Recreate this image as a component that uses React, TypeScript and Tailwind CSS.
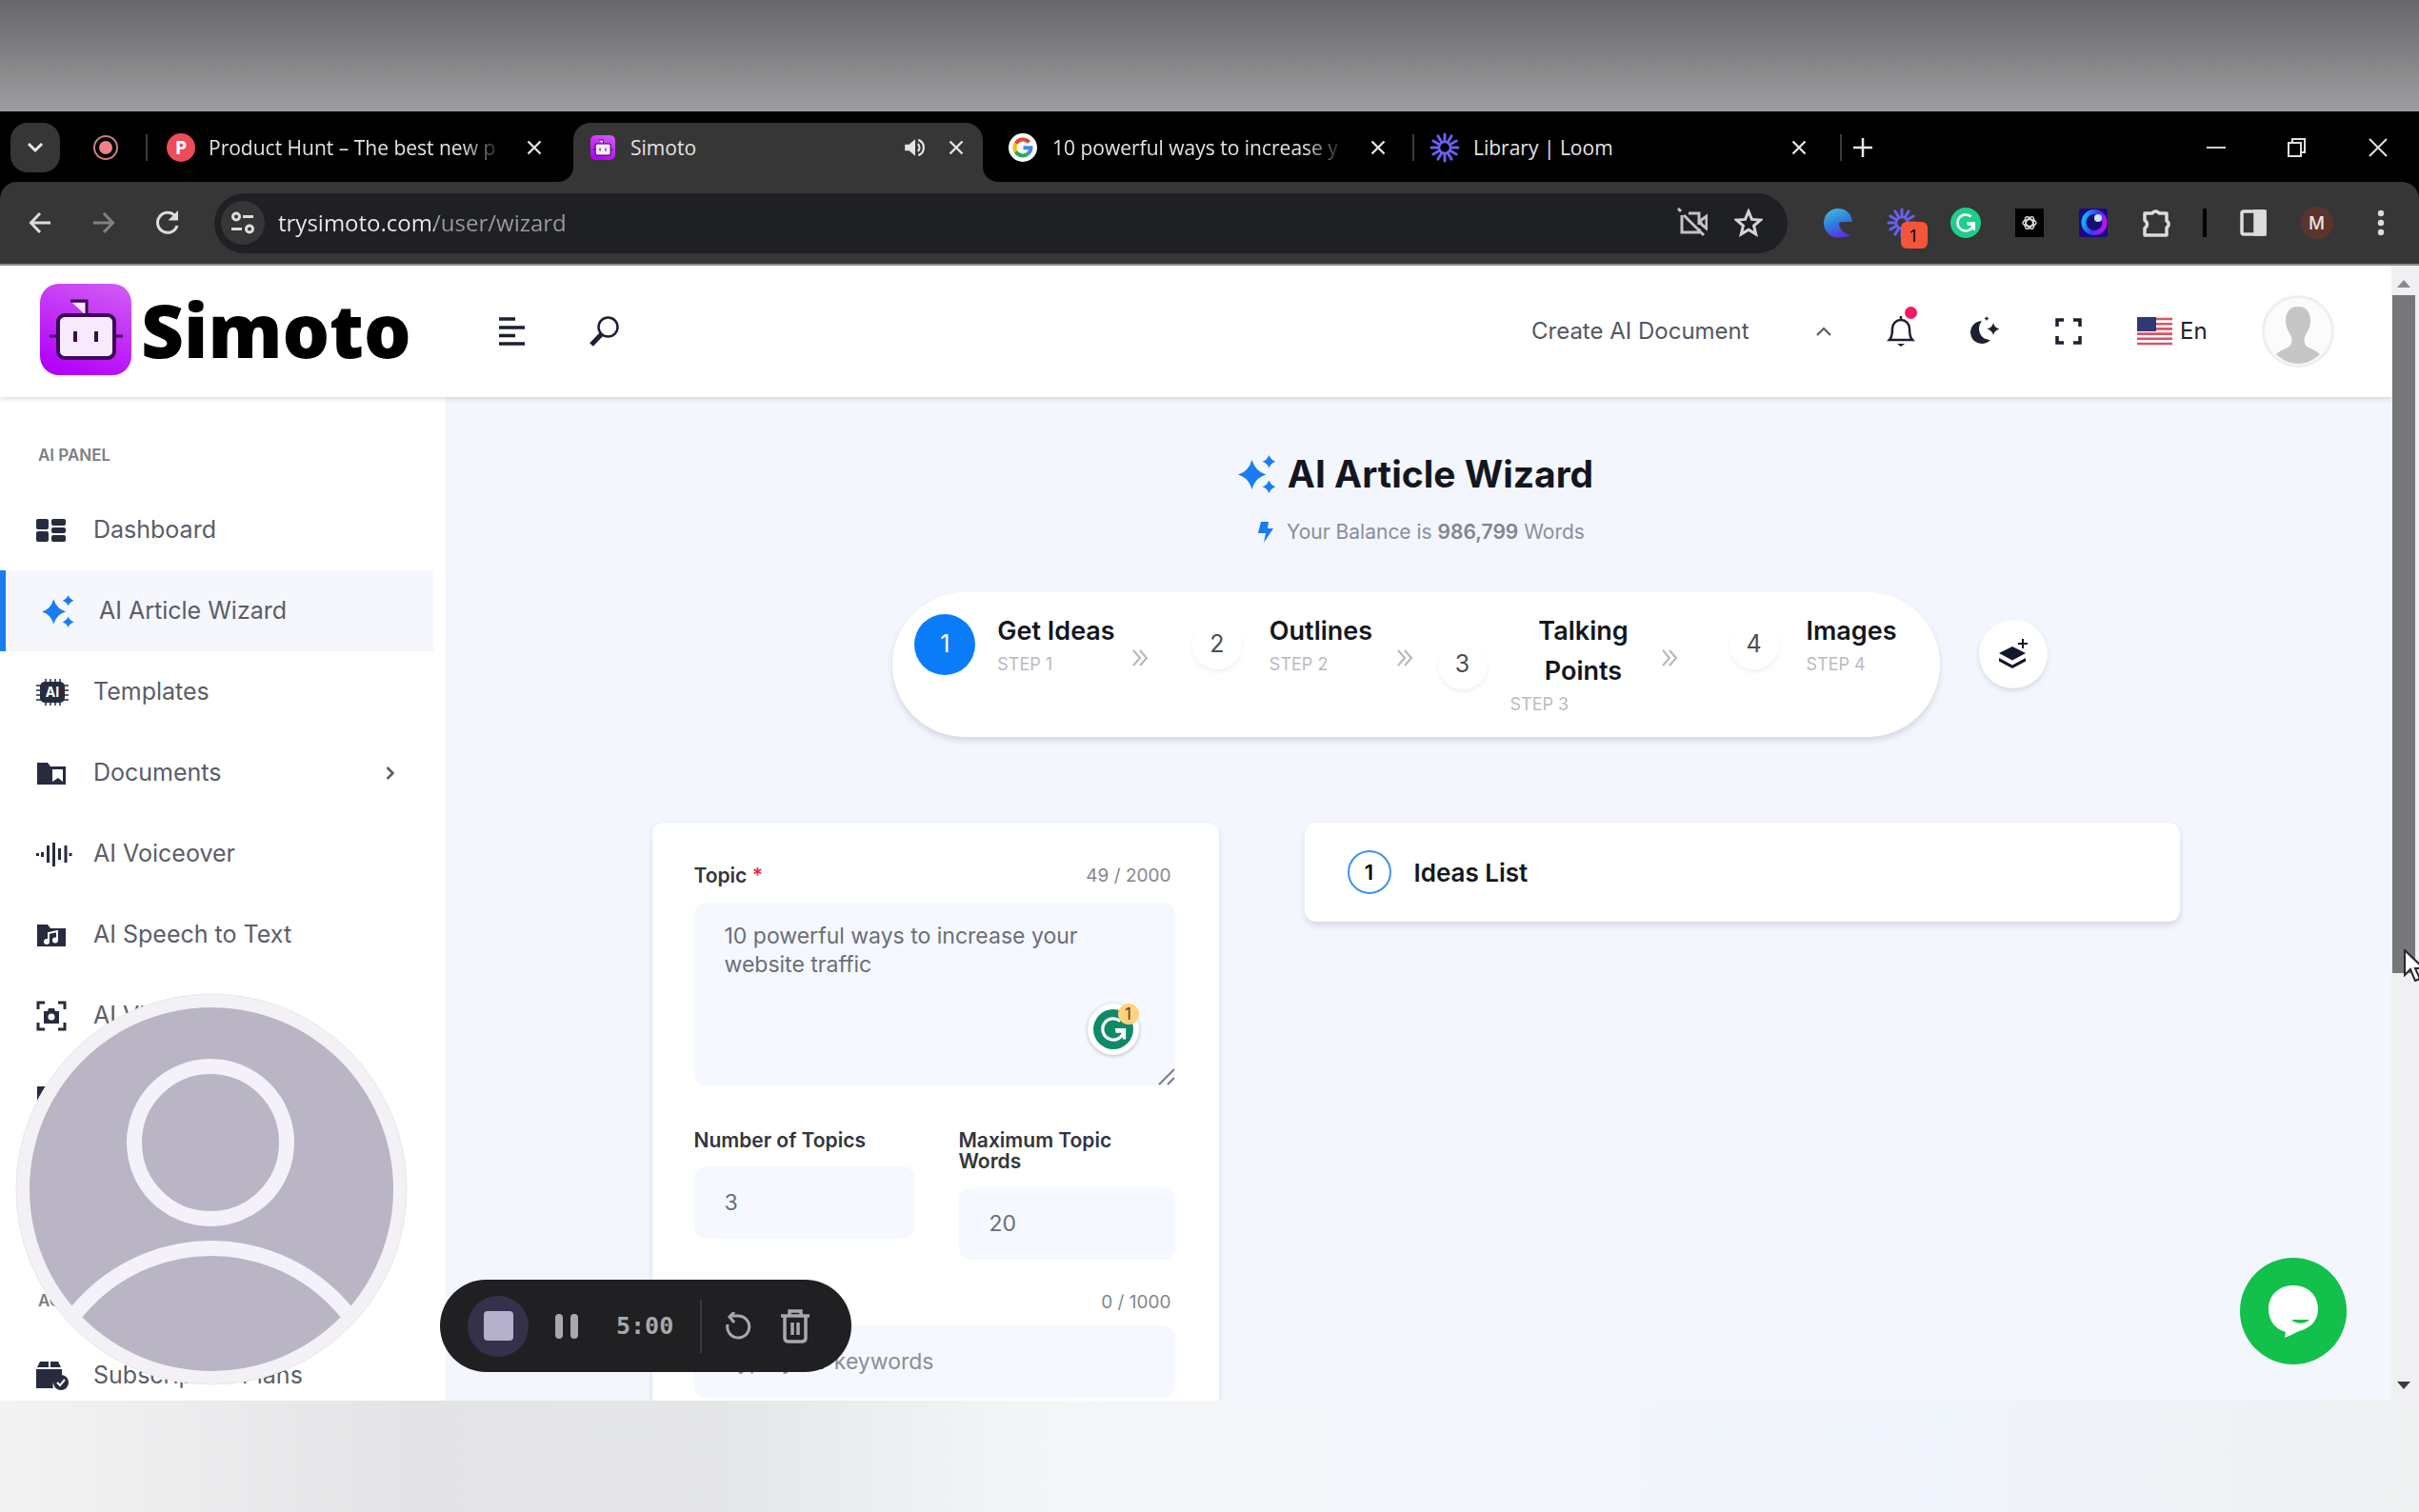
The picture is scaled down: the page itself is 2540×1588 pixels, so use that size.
import { useState, type ReactNode } from "react";
import { clsx } from "clsx";

const INK = "#262b40";

type IconProps = { className?: string };

/* ---------- icons ---------- */

function CloseIcon({ className = "size-[18px]" }: IconProps) {
  return (
    <svg viewBox="0 0 18 18" className={className} fill="none" stroke="currentColor" strokeWidth="2.4">
      <path d="M2.5 2.5l13 13M15.500 2.5l-13 13" />
    </svg>
  );
}

function Sparkles({ className }: IconProps) {
  return (
    <svg viewBox="0 0 40 40" className={className} fill="currentColor">
      <path d="M14.500 5q3.500 12 15 15.500-11.500 3-15 15.500Q11 23.500 0 20.500 11 17.500 14.500 5z" />
      <path d="M32.500 0q1.800 5 7 6.700-5.200 1.800-7 6.800-1.800-5-7-6.800 5.200-1.700 7-6.700z" />
      <path d="M32.500 26.500q1.800 5 7 6.700-5.200 1.800-7 6.800-1.800-5-7-6.800 5.200-1.700 7-6.700z" />
    </svg>
  );
}

function LoomMark({ className }: IconProps) {
  return (
    <svg viewBox="0 0 32 32" className={className} stroke="#6a5ff0" strokeWidth="3" strokeLinecap="round">
      {Array.from({ length: 12 }, (_, i) => (
        <path key={i} d="M16 9.500V2" transform={`rotate(${i * 30} 16 16)`} />
      ))}
      <circle cx="16" cy="16" r="6" fill="none" strokeWidth="2.500" />
    </svg>
  );
}

function GoogleMark() {
  return (
    <svg viewBox="0 0 30 30" className="size-[30px] shrink-0">
      <circle cx="15" cy="15" r="15" fill="#fff" />
      <g fill="none" strokeWidth="4">
        <path d="M21.500 9.500A8.500 8.500 0 0 0 7.600 10.800" stroke="#ea4335" />
        <path d="M7.600 10.800a8.500 8.500 0 0 0 0 8.400" stroke="#fbbc05" />
        <path d="M7.600 19.200a8.500 8.500 0 0 0 13 2" stroke="#34a853" />
        <path d="M20.600 21.200A8.500 8.500 0 0 0 23.400 15.300H15.500" stroke="#4285f4" />
      </g>
    </svg>
  );
}

function RobotLogo({ className }: IconProps) {
  return (
    <svg viewBox="0 0 96 96" className={className}>
      <defs>
        <linearGradient id="robot-bg" x1="0.7" y1="0" x2="0.3" y2="1">
          <stop offset="0" stopColor="#cf56f4" />
          <stop offset="1" stopColor="#b300fa" />
        </linearGradient>
      </defs>
      <rect width="96" height="96" rx="20" fill="url(#robot-bg)" />
      <path d="M34 20h14v13z" fill="#fbeaff" />
      <path d="M32 18h17v15M10 55h9M78 55h9" fill="none" stroke="#3c0a52" strokeWidth="3" />
      <rect x="19" y="33" width="59" height="45" rx="7" fill="#f8eafd" stroke="#3c0a52" strokeWidth="4" />
      <path d="M37 50v11M59 50v11" stroke="#3c0a52" strokeWidth="4" />
    </svg>
  );
}

function GrammarlyG({ bg }: { bg: string }) {
  return (
    <svg viewBox="0 0 32 32" className="size-full">
      <circle cx="16" cy="16" r="16" fill={bg} />
      <path d="M21.500 9.500a8.500 8.500 0 1 0 2.800 8.200H18" fill="none" stroke="#fff" strokeWidth="2.500" />
      <path d="M17.500 16.500h7.300v7.500" fill="none" stroke="#fff" strokeWidth="2.500" />
    </svg>
  );
}

/* ---------- browser chrome ---------- */

function TabTitle({ children, fade }: { children: ReactNode; fade?: boolean }) {
  return (
    <span
      className={clsx(
        "flex-1 whitespace-nowrap text-[21px] leading-7 text-[#e3e3e3]",
        fade && "[mask-image:linear-gradient(to_right,black_86%,transparent)]"
      )}
    >
      {children}
    </span>
  );
}

function TabClose({ label }: { label: string }) {
  return (
    <button type="button" aria-label={`Close ${label}`} className="flex size-9 shrink-0 items-center justify-center text-[#e3e3e3]">
      <CloseIcon />
    </button>
  );
}

function TabStrip() {
  return (
    <div className="flex h-[74px] items-end bg-black">
      <div className="flex h-[62px] items-start">
        <button
          type="button"
          aria-label="Search tabs"
          className="ml-[11px] flex size-[52px] items-center justify-center rounded-[18px] bg-[#363636] text-[#e8e8e8]"
        >
          <svg viewBox="0 0 18 18" className="size-[18px]" fill="none" stroke="currentColor" strokeWidth="3">
            <path d="M2 5l7 7 7-7" />
          </svg>
        </button>
        <div className="ml-[35px] mt-[13px] flex size-[26px] items-center justify-center rounded-full border-2 border-[#c87f86]">
          <span className="size-[14px] rounded-full bg-[#f0808a]" />
        </div>
        <span className="ml-[29px] mt-3 h-7 w-[2px] bg-[#3c3c3c]" />
      </div>

      <div className="h-[62px] w-[447px] pl-5 pr-[23px] pt-2">
        <div className="flex items-center gap-[14px]">
          <span className="flex size-[30px] shrink-0 items-center justify-center rounded-full bg-[#ee4b5b] text-[20px] font-bold text-white">
            P
          </span>
          <TabTitle fade>Product Hunt – The best new p</TabTitle>
          <TabClose label="Product Hunt" />
        </div>
      </div>

      <div className="relative h-[62px] w-[430px] rounded-t-[18px] bg-[#363636] pl-[18px] pr-[10px] pt-2">
        <svg viewBox="0 0 16 16" className="absolute bottom-0 right-full size-4" fill="#363636">
          <path d="M16 0v16H0A16 16 0 0 0 16 0z" />
        </svg>
        <svg viewBox="0 0 16 16" className="absolute bottom-0 left-full size-4" fill="#363636">
          <path d="M0 0v16h16A16 16 0 0 1 0 0z" />
        </svg>
        <div className="flex items-center">
          <RobotLogo className="mr-4 size-[26px] shrink-0" />
          <TabTitle>Simoto</TabTitle>
          <button type="button" aria-label="Mute tab" className="mr-3 text-[#e3e3e3]">
            <svg viewBox="0 0 24 24" className="size-[26px]" fill="currentColor">
              <path d="M2 9v6h4l6 5V4L6 9z" />
              <path d="M14.500 8.500a4.500 4.500 0 0 1 0 7M15 4.500a8 8 0 0 1 0 15" fill="none" stroke="currentColor" strokeWidth="2" />
            </svg>
          </button>
          <TabClose label="Simoto" />
        </div>
      </div>

      <div className="h-[62px] w-[451px] pl-[27px] pr-[18px] pt-2">
        <div className="flex items-center gap-4">
          <GoogleMark />
          <TabTitle fade>10 powerful ways to increase y</TabTitle>
          <TabClose label="Google search" />
        </div>
      </div>
      <span className="mb-[22px] h-7 w-[2px] bg-[#3c3c3c]" />
      <div className="h-[62px] w-[447px] pl-4 pr-[25px] pt-2">
        <div className="flex items-center gap-[14px]">
          <LoomMark className="size-8 shrink-0" />
          <TabTitle>Library | Loom</TabTitle>
          <TabClose label="Loom" />
        </div>
      </div>
      <span className="mb-[22px] h-7 w-[2px] bg-[#3c3c3c]" />
      <button type="button" aria-label="New tab" className="mb-[26px] ml-3 text-[#e8e8e8]">
        <svg viewBox="0 0 20 20" className="size-5" stroke="currentColor" strokeWidth="2.500">
          <path d="M10 0v20M0 10h20" />
        </svg>
      </button>

      <div className="mb-[24px] ml-auto flex items-center gap-[63px] pr-[33px] text-[#e0e0e0]">
        <button type="button" aria-label="Minimize" className="flex h-6 w-5 items-center">
          <span className="h-[2px] w-5 bg-[#d0d0d0]" />
        </button>
        <button type="button" aria-label="Restore">
          <svg viewBox="0 0 24 24" className="size-6" fill="none" stroke="currentColor" strokeWidth="2">
            <path d="M3 7h13v14H3zM7 6V3h13v14h-3" />
          </svg>
        </button>
        <button type="button" aria-label="Close window">
          <svg viewBox="0 0 20 20" className="size-5" stroke="currentColor" strokeWidth="2">
            <path d="M1 1l18 18M19 1L1 19" />
          </svg>
        </button>
      </div>
    </div>
  );
}

function BarButton({ label, children }: { label: string; children: ReactNode }) {
  return (
    <button type="button" aria-label={label} className="flex h-12 w-[67px] shrink-0 items-center justify-center text-[#dcdcdc]">
      {children}
    </button>
  );
}

function Toolbar() {
  return (
    <div className="bg-black">
      <div className="flex h-[88px] items-center rounded-t-[18px] border-b-2 border-[#8c8c8e] bg-[#363637] pl-2 pr-[7px]">
        <BarButton label="Back">
          <svg viewBox="0 0 24 24" className="size-6" fill="none" stroke="currentColor" strokeWidth="3">
            <path d="M23 12H3M12 2L2.500 12l9.500 10" />
          </svg>
        </BarButton>
        <BarButton label="Forward">
          <svg viewBox="0 0 24 24" className="size-6" fill="none" stroke="#818182" strokeWidth="3">
            <path d="M1 12h20M12 2l9.500 10L12 22" />
          </svg>
        </BarButton>
        <BarButton label="Reload">
          <svg viewBox="0 0 26 26" className="size-[26px]" fill="none" stroke="currentColor" strokeWidth="3">
            <path d="M23 16A10.500 10.500 0 1 1 21 6" />
            <path d="M24 0v10.500H13.500l5-5z" fill="currentColor" stroke="none" />
          </svg>
        </BarButton>

        <div className="ml-4 flex h-[63px] flex-1 items-center rounded-full bg-[#1f2023] pl-[7px] pr-[26px]">
          <span className="flex size-[46px] items-center justify-center rounded-full bg-[#363638] text-[#dcdcdc]">
            <svg viewBox="0 0 26 26" className="size-[26px]" fill="none" stroke="currentColor" strokeWidth="3">
              <circle cx="6" cy="6.500" r="3.500" />
              <path d="M13 6.500h11M1 19.500h11" />
              <circle cx="20" cy="19.500" r="3.500" />
            </svg>
          </span>
          {/* host is brighter than the path */}
          <input
            type="text"
            aria-label="Address"
            defaultValue="trysimoto.com/user/wizard"
            className="ml-[14px] min-w-0 flex-1 bg-[linear-gradient(to_right,#ececec_164px,#9a9b9f_164px)] bg-clip-text text-[24px] text-transparent outline-none"
          />
          <button type="button" aria-label="Camera blocked" className="text-[#c4c4c6]">
            <svg viewBox="0 0 32 32" className="size-8" fill="none" stroke="currentColor" strokeWidth="3">
              <path d="M5 8v18h18V22M12 6h11v12" />
              <path d="M1 1l3 3M7 8l21 21M24 14l7-5v13l-5-4z" />
            </svg>
          </button>
          <button type="button" aria-label="Bookmark" className="ml-7 text-[#d4d4d6]">
            <svg viewBox="0 0 30 30" className="size-[30px]" fill="none" stroke="currentColor" strokeWidth="3">
              <path d="M15 3l3.500 8.400 9 .7-6.900 5.900 2.100 8.900L15 22.200l-7.700 4.700 2.100-8.900-6.900-5.900 9-.7z" />
            </svg>
          </button>
        </div>

        <div className="ml-[19px] flex items-center">
          <BarButton label="Edge extension">
            <svg viewBox="0 0 32 32" className="size-8">
              <defs>
                <linearGradient id="edge-g" x1="0.2" y1="0" x2="0.6" y2="1">
                  <stop offset="0" stopColor="#46b9d8" />
                  <stop offset="0.5" stopColor="#2c7fdf" />
                  <stop offset="1" stopColor="#5b2fe0" />
                </linearGradient>
              </defs>
              <path
                d="M31 15C30 6 24 1 16 1 7 1 1 8 1 16.500 1 25 8 32 17 31.500c5 0 9-1 13-2.500-6-1-12-4-13-12 0-2 2-2 14-2z"
                fill="url(#edge-g)"
              />
            </svg>
          </BarButton>
          <BarButton label="Loom, 1 notification">
            <span className="relative">
              <LoomMark className="size-8" />
              <span className="absolute left-[15px] top-[15px] flex size-7 items-center justify-center rounded-md bg-[#f4553a] text-[19px] text-black">
                1
              </span>
            </span>
          </BarButton>
          <BarButton label="Grammarly">
            <span className="size-8">
              <GrammarlyG bg="#1fce8c" />
            </span>
          </BarButton>
          <BarButton label="AI extension">
            <svg viewBox="0 0 30 30" className="size-[30px]">
              <rect width="30" height="30" fill="#000" />
              <g fill="none" stroke="#d8d8d8" strokeWidth="1.500">
                <ellipse cx="15" cy="15" rx="7" ry="3.500" />
                <ellipse cx="15" cy="15" rx="7" ry="3.500" transform="rotate(60 15 15)" />
                <ellipse cx="15" cy="15" rx="7" ry="3.500" transform="rotate(120 15 15)" />
              </g>
            </svg>
          </BarButton>
          <BarButton label="Orb extension">
            <svg viewBox="0 0 30 30" className="size-[30px]">
              <defs>
                <linearGradient id="orb-g" x1="0" y1="0.3" x2="1" y2="0.6">
                  <stop offset="0" stopColor="#12b4ff" />
                  <stop offset="0.55" stopColor="#3a32ff" />
                  <stop offset="1" stopColor="#c012f0" />
                </linearGradient>
              </defs>
              <rect width="30" height="30" rx="3" fill="#1a0a80" />
              <circle cx="16" cy="14.500" r="11" fill="#15106e" stroke="url(#orb-g)" strokeWidth="5" />
              <circle cx="20" cy="10" r="4" fill="#c9e6ff" />
            </svg>
          </BarButton>
          <BarButton label="Extensions">
            <svg viewBox="0 0 32 32" className="size-8" fill="none" stroke="currentColor" strokeWidth="3.500" strokeLinejoin="round">
              <path d="M3 6h8a4 4 0 0 1 7 0h8v8a4 4 0 0 1 0 7v8H3v-7.500a4.500 4.500 0 0 0 0-8z" />
            </svg>
          </BarButton>
          <span className="mx-[15px] h-[30px] w-1 bg-black" />
          <BarButton label="Side panel">
            <svg viewBox="0 0 30 30" className="size-[30px]" fill="none" stroke="currentColor" strokeWidth="3.500">
              <rect x="3" y="3" width="24" height="24" rx="2" />
              <path d="M17 3h10v24H17z" fill="currentColor" />
            </svg>
          </BarButton>
          <BarButton label="Profile">
            <span className="flex size-[34px] items-center justify-center rounded-full bg-[#5a352e] text-[19px] font-semibold text-[#f0e4e0]">
              M
            </span>
          </BarButton>
          <BarButton label="Menu">
            <svg viewBox="0 0 8 28" className="h-7 w-2" fill="currentColor">
              <circle cx="4" cy="4" r="3.200" />
              <circle cx="4" cy="14" r="3.200" />
              <circle cx="4" cy="24" r="3.200" />
            </svg>
          </BarButton>
        </div>
      </div>
    </div>
  );
}

/* ---------- app header ---------- */

function Header() {
  return (
    <header className="relative z-10 flex h-[138px] shrink-0 items-center bg-white pl-[42px] pr-[60px] text-[#1d2030] shadow-[0_2px_5px_rgba(60,65,90,0.18)]">
      <a href="#" className="flex items-center gap-[10px] pb-1">
        <RobotLogo className="size-24" />
        <span className="font-['Open_Sans',sans-serif] text-[78px] font-extrabold leading-[96px] text-black">Simoto</span>
      </a>
      <button type="button" aria-label="Toggle menu" className="ml-[92px]">
        <svg viewBox="0 0 28 32" className="h-8 w-7" stroke="currentColor" strokeWidth="3.500">
          <path d="M0 3h17M0 12h27M0 20.500h17M0 29h27" />
        </svg>
      </button>
      <button type="button" aria-label="Search" className="ml-[66px]">
        <svg viewBox="0 0 34 34" className="size-[34px]" fill="none" stroke="currentColor">
          <circle cx="20.500" cy="12.500" r="10" strokeWidth="2.500" />
          <path d="M13.500 20L3 31" strokeWidth="5" />
        </svg>
      </button>

      <div className="ml-auto flex items-center gap-14">
        <button type="button" className="flex w-[316px] items-center justify-between text-[24px] text-[#55575f]">
          Create AI Document
          <svg viewBox="0 0 18 12" className="h-3 w-[18px]" fill="none" stroke="currentColor" strokeWidth="2">
            <path d="M2 10l7-7 7 7" />
          </svg>
        </button>
        <button type="button" aria-label="Notifications" className="relative">
          <svg viewBox="0 0 32 32" className="size-8" fill="none" stroke="currentColor" strokeWidth="2.500">
            <path d="M16 0v4M4 25c3-3 3-7 3-12a9 9 0 0 1 18 0c0 5 0 9 3 12z" />
            <path d="M12 29h8l-4 3z" fill="currentColor" stroke="none" />
          </svg>
          <span className="absolute -top-[10px] left-5 size-[13px] rounded-full bg-[#f5195f]" />
        </button>
        <button type="button" aria-label="Dark mode">
          <svg viewBox="0 0 32 32" className="size-8" fill="currentColor">
            <path d="M13 5a13 13 0 0 0-2 13c2 5 7 7 11 7a12 12 0 1 1-9-20z" />
            <path d="M25 7q1 5 6.500 6.500Q26 15 25 20q-1-5-6.500-6.500Q24 12 25 7zM18 0q.5 2 2.500 2.500Q18.500 3 18 5q-.5-2-2.500-2.500Q17.500 2 18 0z" />
          </svg>
        </button>
        <button type="button" aria-label="Full screen">
          <svg viewBox="0 0 32 32" className="size-8" fill="none" stroke="currentColor" strokeWidth="3.500">
            <path d="M4 11V4h7M21 4h7v7M28 21v7h-7M11 28H4v-7" />
          </svg>
        </button>
        <button type="button" className="flex w-[75px] items-center gap-2 text-[24px] leading-[30px]">
          <svg viewBox="0 0 37 30" className="h-[30px] w-[37px] shrink-0">
            <rect width="37" height="30" fill="#fff" />
            <path d="M0 2h37M0 7.200h37M0 12.400h37M0 17.600h37M0 22.800h37M0 28h37" stroke="#dc5268" strokeWidth="2.600" />
            <rect width="20" height="15" fill="#2f3a72" />
          </svg>
          En
        </button>
        <button type="button" aria-label="Account" className="size-[76px] overflow-hidden rounded-full border-[3px] border-[#efefef] bg-[#fbfbfb]">
          <svg viewBox="0 0 70 70" className="size-full" fill="#c6c6c8">
            <path d="M35 9c9 0 13 6 13 15 0 8-4 12-6 17-1 6 0 9 4 11 5 2 9 4 12 7-6 6-14 10-23 10s-17-4-23-10c3-3 7-5 12-7 4-2 5-5 4-11-2-5-6-9-6-17 0-9 4-15 13-15z" />
          </svg>
        </button>
      </div>
    </header>
  );
}

/* ---------- sidebar ---------- */

const folderPath = "M1 5h11l3 4h16v19H1z";

const sidebarIcons = {
  dashboard: (
    <svg viewBox="0 0 32 24" className="h-6 w-8" fill={INK}>
      <rect width="13" height="11" rx="2" />
      <rect y="13" width="13" height="11" rx="2" />
      <rect x="16" width="15" height="7" rx="2" />
      <rect x="16" y="9" width="15" height="6" rx="2" />
      <rect x="16" y="17" width="15" height="7" rx="2" />
    </svg>
  ),
  wizard: <Sparkles className="size-[34px] text-[#1a7cf2]" />,
  chip: (
    <svg viewBox="0 0 34 28" className="h-7 w-[34px]" fill={INK}>
      <path d="M10 0v28M15 0v28M20 0v28M25 0v28M0 7h34M0 12h34M0 17h34M0 22h34" stroke={INK} strokeWidth="1.500" />
      <rect x="4" y="3" width="26" height="22" rx="5" />
      <text x="17" y="19" fill="#fff" fontSize="14" fontWeight="700" textAnchor="middle">
        AI
      </text>
    </svg>
  ),
  documents: (
    <svg viewBox="0 0 32 32" className="size-8" fill={INK}>
      <path d={folderPath} />
      <path d="M17 12h11v13l-5-4-6 4z" fill="#fff" />
    </svg>
  ),
  voice: (
    <svg viewBox="0 0 38 26" className="h-[26px] w-[38px]" stroke={INK} strokeWidth="3">
      <path d="M1.500 12v3M6.500 11v5M12.500 4v18M18.500 1v25M24.500 7v12M31 4v18M36 12v3" />
    </svg>
  ),
  speech: (
    <svg viewBox="0 0 32 32" className="size-8" fill={INK}>
      <path d={folderPath} />
      <path d="M13 23v-9l9-2v9" fill="none" stroke="#fff" strokeWidth="2" />
      <circle cx="11" cy="23" r="3" fill="#fff" />
      <circle cx="20" cy="21.500" r="3" fill="#fff" />
    </svg>
  ),
  vision: (
    <svg viewBox="0 0 32 32" className="size-8" fill="none" stroke={INK} strokeWidth="3">
      <path d="M2 9V2h7M23 2h7v7M30 23v7h-7M9 30H2v-7" />
      <path d="M8 11h4l1-3h6l1 3h4v13H8z" fill={INK} stroke="none" />
      <circle cx="16" cy="17" r="3.500" fill="#fff" stroke="none" />
    </svg>
  ),
  images: (
    <svg viewBox="0 0 32 32" className="size-8" fill={INK}>
      <path d={folderPath} />
    </svg>
  ),
  plans: (
    <svg viewBox="0 0 36 30" className="h-[30px] w-9" fill={INK}>
      <path d="M4 0h9v6H1zM15 0h8l3 6H15zM0 8h27v8a9 9 0 0 0-9 12H0z" />
      <circle cx="26" cy="22" r="8" />
      <path d="M22 22l3 3 5-6" fill="none" stroke="#fff" strokeWidth="2" />
    </svg>
  ),
};

type NavItem = { label: string; icon: keyof typeof sidebarIcons; active?: boolean; expandable?: boolean };

const panelItems: NavItem[] = [
  { label: "Dashboard", icon: "dashboard" },
  { label: "AI Article Wizard", icon: "wizard", active: true },
  { label: "Templates", icon: "chip" },
  { label: "Documents", icon: "documents", expandable: true },
  { label: "AI Voiceover", icon: "voice" },
  { label: "AI Speech to Text", icon: "speech" },
  { label: "AI Vision", icon: "vision" },
  { label: "AI Images", icon: "images" },
  { label: "AI Chat", icon: "documents" },
];

function NavRow({ item }: { item: NavItem }) {
  return (
    <li>
      <a
        href="#"
        className={clsx(
          "mr-[13px] flex h-[85px] items-center pl-[38px] text-[25px] text-[#5b5d66]",
          item.active && "border-l-[6px] border-[#1a7cf2] bg-[#f5f7fc]"
        )}
      >
        <span className="w-[60px] shrink-0">{sidebarIcons[item.icon]}</span>
        {item.label}
        {item.expandable && (
          <svg viewBox="0 0 10 16" className="ml-auto mr-10 h-4 w-[10px]" fill="none" stroke="currentColor" strokeWidth="2.500">
            <path d="M1.500 2l6 6-6 6" />
          </svg>
        )}
      </a>
    </li>
  );
}

function Sidebar() {
  return (
    <nav className="w-[468px] shrink-0 bg-white">
      <h2 className="flex h-[97px] items-end pb-6 pl-10 text-[17px] font-semibold leading-6 text-[#7c7e85]">AI PANEL</h2>
      <ul>
        {panelItems.map((item) => (
          <NavRow key={item.label} item={item} />
        ))}
      </ul>
      <h2 className="flex h-[123px] items-end pb-6 pl-10 text-[17px] font-semibold leading-6 text-[#7c7e85]">ACCOUNT</h2>
      <ul>
        <NavRow item={{ label: "Subscription Plans", icon: "plans" }} />
      </ul>
    </nav>
  );
}

/* ---------- wizard ---------- */

const steps = [
  { title: "Get Ideas", wide: false },
  { title: "Outlines", wide: false },
  { title: "Talking Points", wide: true },
  { title: "Images", wide: false },
];

function Stepper() {
  return (
    <div className="relative mt-[51px] w-[1100px] max-w-full">
      <ol className="grid grid-cols-[262fr_278fr_278fr_272fr] rounded-[76px] bg-white pb-5 pl-[10px] pt-5 shadow-[0_4px_6px_rgba(60,65,90,0.16)]">
        {steps.map((step, i) => (
          <li key={step.title} className={clsx("flex items-start", (i === 1 || i === 2) && "pl-4")}>
            <div className="flex flex-1 items-center justify-center">
              <span className={clsx("flex w-16 shrink-0 justify-center", step.wide ? "mr-[18px]" : "mr-[23px]")}>
                <span
                  className={clsx(
                    "flex items-center justify-center rounded-full text-[25px]",
                    i === 0 ? "size-16 bg-[#0a7cfa] text-white" : "size-[52px] text-[#4b4d55] shadow-[0_3px_4px_rgba(60,65,90,0.07)]"
                  )}
                >
                  {i + 1}
                </span>
              </span>
              <div className={clsx(step.wide && "w-[154px]")}>
                <p className="text-center text-[27px] font-semibold leading-[42px] text-[#14161f]">{step.title}</p>
                <p className="text-[18px] leading-7 text-[#b9bbc0]">STEP {i + 1}</p>
              </div>
            </div>
            {i < 3 && (
              <svg viewBox="0 0 18 20" className="mx-[3px] mt-[39px] h-5 w-[18px]" fill="none" stroke="#b4b6ba" strokeWidth="2">
                <path d="M2 2l7 8-7 8M9 2l7 8-7 8" />
              </svg>
            )}
          </li>
        ))}
      </ol>
      <button
        type="button"
        aria-label="New article"
        className="absolute left-full top-[29px] ml-[41px] flex size-[72px] items-center justify-center rounded-full bg-white shadow-[0_3px_5px_rgba(60,65,90,0.14)]"
      >
        <svg viewBox="0 0 32 32" className="size-8" fill="#14162a">
          <path d="M15 8l14 7-14 7.500L1 15z" />
          <path d="M1 20l14 7.500L29 20v3.500L15 31 1 23.500z" />
          <path d="M26 0v10M21 5h10" stroke="#14162a" strokeWidth="2" />
        </svg>
      </button>
    </div>
  );
}

const fieldClass = "w-full rounded-xl bg-[#f5f8fe] px-8 text-[23px] text-[#6b6e76] outline-none";
const labelClass = "text-[21px] font-semibold leading-[22px] text-[#33353d]";

function TopicForm() {
  const [topic, setTopic] = useState("10 powerful ways to increase your website traffic");
  const [keywords, setKeywords] = useState("");

  return (
    <form className="rounded-xl bg-white pb-20 pl-11 pr-[46px] pt-[44px] shadow-[0_3px_6px_rgba(60,65,90,0.12)]">
      <div className="flex items-center justify-between pr-1 leading-6">
        <label htmlFor="topic" className={labelClass}>
          Topic <span className="text-[#e8294b]">*</span>
        </label>
        <span className="text-[19px] text-[#84868e]">{topic.length} / 2000</span>
      </div>
      <div className="relative mt-4 flex">
        <textarea
          id="topic"
          value={topic}
          onChange={(e) => setTopic(e.target.value)}
          className={clsx(fieldClass, "h-48 resize-none pt-5 leading-[30px]")}
        />
        <div className="absolute bottom-8 right-[38px] size-[54px] rounded-full border-[6px] border-white bg-white shadow-[0_1px_4px_rgba(0,0,0,0.25)]">
          <GrammarlyG bg="#0f8a68" />
          <span className="absolute -right-[6px] -top-[6px] flex size-[22px] items-center justify-center rounded-full bg-[#ffd27d] text-[17px] leading-none text-[#5a4218]">
            1
          </span>
        </div>
        <svg viewBox="0 0 18 18" className="absolute bottom-0 right-0 size-[18px]" stroke="#7c7e84" strokeWidth="2">
          <path d="M1 17L17 1M10 17l7-7" />
        </svg>
      </div>

      <div className="mt-[47px] grid grid-cols-[231fr_227fr] items-start gap-[47px]">
        <div>
          <label htmlFor="count" className={clsx(labelClass, "block")}>
            Number of Topics
          </label>
          <input id="count" defaultValue="3" className={clsx(fieldClass, "mt-4 h-[76px]")} />
        </div>
        <div>
          <label htmlFor="max-words" className={clsx(labelClass, "block")}>
            Maximum Topic Words
          </label>
          <input id="max-words" defaultValue="20" className={clsx(fieldClass, "mt-4 h-[76px]")} />
        </div>
      </div>

      <div className="mt-[33px] flex items-center justify-between pr-1 leading-6">
        <label htmlFor="keywords" className={labelClass}>
          Keywords
        </label>
        <span className="text-[19px] text-[#84868e]">{keywords.length} / 1000</span>
      </div>
      <input
        id="keywords"
        value={keywords}
        onChange={(e) => setKeywords(e.target.value)}
        placeholder="Type your keywords"
        className={clsx(fieldClass, "mt-3 h-[76px] placeholder:text-[#8b8e96]")}
      />
    </form>
  );
}

function Wizard() {
  return (
    <main className="flex flex-1 flex-col items-center overflow-hidden bg-[#f3f6fd] pr-[6px] pt-[59px]">
      <h1 className="flex items-center gap-3 text-[39px] font-bold leading-[44px] text-[#14161f]">
        <Sparkles className="size-10 text-[#1a7cf2]" />
        AI Article Wizard
      </h1>
      <p className="mt-[27px] flex items-center gap-[14px] pl-3 text-[21px] leading-6 text-[#8a8e9b]">
        <svg viewBox="0 0 16 22" className="h-[22px] w-4" fill="#1a7cf2">
          <path d="M3 0h8l-1 7h6L6 22l2-10H0z" />
        </svg>
        <span>
          Your Balance is <b className="font-semibold text-[#80848f]">986,799</b> Words
        </span>
      </p>
      <Stepper />
      <div className="mt-[90px] grid w-[1604px] max-w-full grid-cols-[595fr_919fr] items-start gap-[90px]">
        <TopicForm />
        <section className="flex h-[104px] items-center gap-6 rounded-xl bg-white pl-[45px] shadow-[0_4px_6px_rgba(60,65,90,0.15)]">
          <span className="flex size-[46px] items-center justify-center rounded-full border-2 border-[#3f93ea] text-[22px] font-semibold">1</span>
          <h2 className="text-[26px] font-semibold text-[#14161f]">Ideas List</h2>
        </section>
      </div>
    </main>
  );
}

/* ---------- floating things ---------- */

function CameraBubble() {
  return (
    <svg viewBox="0 0 412 412" className="absolute bottom-4 left-4 z-20 size-[412px]" role="img" aria-label="Camera preview">
      <defs>
        <clipPath id="bubble">
          <circle cx="206" cy="206" r="192" />
        </clipPath>
      </defs>
      <circle cx="206" cy="206" r="205" fill="#f4f1f6" stroke="#e9e6ea" strokeWidth="1" />
      <circle cx="206" cy="206" r="191" fill="#b9b5c5" />
      <g clipPath="url(#bubble)" fill="none" stroke="#f4f1fa" strokeWidth="16">
        <circle cx="205" cy="157" r="80" />
        <circle cx="206" cy="451" r="183" />
      </g>
    </svg>
  );
}

function Recorder() {
  return (
    <div className="absolute bottom-[30px] left-[462px] z-20 flex h-[97px] w-[432px] items-center rounded-full bg-[#201f22] pl-[29px] text-[#aaa8ad]">
      <button type="button" aria-label="Stop recording" className="flex size-16 items-center justify-center rounded-full bg-[#35314a]">
        <span className="size-[31px] rounded-sm bg-[#b5b0cc]" />
      </button>
      <button type="button" aria-label="Pause recording" className="ml-7 flex gap-2">
        <span className="h-[26px] w-2 rounded-sm bg-current" />
        <span className="h-[26px] w-2 rounded-sm bg-current" />
      </button>
      <time className="ml-10 font-['DejaVu_Sans_Mono',monospace] text-[25px] font-bold">5:00</time>
      <span className="ml-7 h-14 w-[2px] bg-[#3a393d]" />
      <button type="button" aria-label="Restart recording" className="ml-6">
        <svg viewBox="0 0 28 30" className="h-[30px] w-7" fill="none" stroke="currentColor" strokeWidth="3">
          <path d="M3 13a11.500 11.500 0 1 0 11-9H5" />
          <path d="M10 0L5 5l5 6" />
        </svg>
      </button>
      <button type="button" aria-label="Delete recording" className="ml-[30px]">
        <svg viewBox="0 0 32 36" className="h-9 w-8" fill="none" stroke="currentColor" strokeWidth="3.500">
          <path d="M1 7h30M10 7V2h12v5M5 7v23q0 4 4 4h14q4 0 4-4V7M13 14v13M19 14v13" />
        </svg>
      </button>
    </div>
  );
}

function ChatButton() {
  return (
    <button
      type="button"
      aria-label="Open chat"
      className="absolute bottom-[38px] right-[47px] z-20 flex size-28 items-center justify-center rounded-full bg-[#12c04b]"
    >
      <svg viewBox="0 0 54 58" className="h-[58px] w-[54px]">
        <path d="M27 2c15 0 26 10 26 25 0 12-8 20-20 23-5 2-9 5-15 7l1-6C8 48 1 39 1 27 1 12 12 2 27 2z" fill="#fff" />
        <path d="M25 38h19c-5 5-14 5-19 0z" fill="#12c04b" />
      </svg>
    </button>
  );
}

function Scrollbar() {
  return (
    <div className="relative flex w-[29px] shrink-0 flex-col items-center bg-[#f0f0f2] pr-1 pt-[15px]">
      <span className="size-0 border-x-[7px] border-b-8 border-x-transparent border-b-[#8a8a8c]" />
      <span className="mt-2 h-[712px] w-6 bg-[#77777a]" />
      <span className="mb-3 mt-auto size-0 border-x-[7px] border-t-8 border-x-transparent border-t-[#3c3c3e]" />
      <svg viewBox="0 0 24 36" className="absolute right-[-8px] top-[718px] h-9 w-6" fill="#fff" stroke="#26262c" strokeWidth="2">
        <path d="M1 1v26l6-6 5 12 5-2-5-11h9z" />
      </svg>
    </div>
  );
}

export default function App() {
  return (
    <div className="flex h-screen flex-col overflow-hidden font-['Inter',sans-serif]">
      <div className="h-[117px] shrink-0 bg-linear-to-b from-[#68686a] to-[#9e9ea0]" />
      <div className="shrink-0 bg-black font-['Open_Sans',sans-serif]">
        <TabStrip />
        <Toolbar />
      </div>
      <div className="flex min-h-0 flex-1">
        <div className="relative flex min-w-0 flex-1 flex-col overflow-hidden">
          <Header />
          <div className="flex min-h-0 flex-1">
            <Sidebar />
            <Wizard />
          </div>
          <CameraBubble />
          <Recorder />
          <ChatButton />
        </div>
        <Scrollbar />
      </div>
      <div className="h-[117px] shrink-0 bg-[linear-gradient(to_right,#f3f3f4,#e4e4e7_17%,#e5e6e8_30%,#f4f5f7_42%,#f4f7fc_58%,#f0f4fc_80%,#eef1f1)]" />
    </div>
  );
}
